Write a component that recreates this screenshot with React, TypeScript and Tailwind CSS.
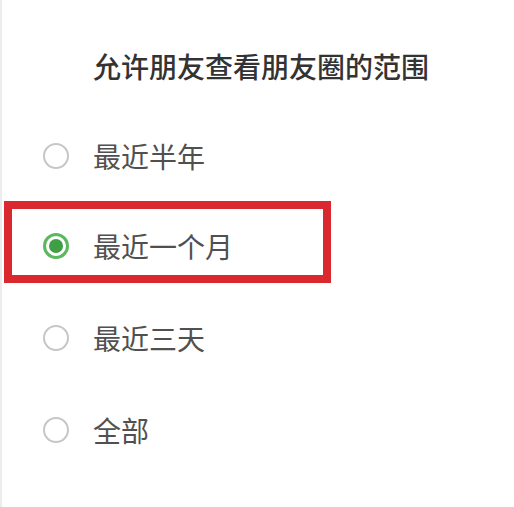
import React from "react";

const font = { fontFamily: '"Noto Sans CJK SC", "Noto Sans", sans-serif' };

function Radio({ checked }: { checked?: boolean }) {
  if (checked) {
    return (
      <div className="w-[26px] h-[26px] rounded-full border-[3px] border-[#5cb85e] flex items-center justify-center shrink-0">
        <div className="w-[14px] h-[14px] rounded-full bg-[#3f9f44]" />
      </div>
    );
  }
  return <div className="w-[26px] h-[26px] rounded-full border-2 border-[#c6c6c6] shrink-0" />;
}

function Row({ label }: { label: string }) {
  return (
    <div className="h-[48px] flex items-center pl-[41px] gap-[24px]">
      <Radio />
      <span className="text-[28px] leading-none text-[#505050]">{label}</span>
    </div>
  );
}

export default function App() {
  return (
    <div className="w-[514px] h-[507px] bg-white border-l-2 border-[#ececec] box-border" style={font}>
      <div className="h-[132px] flex items-center justify-center pl-[6px]">
        <span className="text-[28px] leading-none font-medium text-[#333333]">允许朋友查看朋友圈的范围</span>
      </div>
      <Row label="最近半年" />
      <div className="mt-[21px] ml-[2px] w-[327px] h-[82px] border-[8px] border-[#d9282e] box-border flex items-center pt-[8px]">
        <div className="h-[48px] flex items-center pl-[31px] gap-[24px]">
          <Radio checked />
          <span className="text-[28px] leading-none text-[#505050]">最近一个月</span>
        </div>
      </div>
      <div className="mt-[31px]">
        <Row label="最近三天" />
      </div>
      <div className="mt-[44px]">
        <Row label="全部" />
      </div>
    </div>
  );
}
